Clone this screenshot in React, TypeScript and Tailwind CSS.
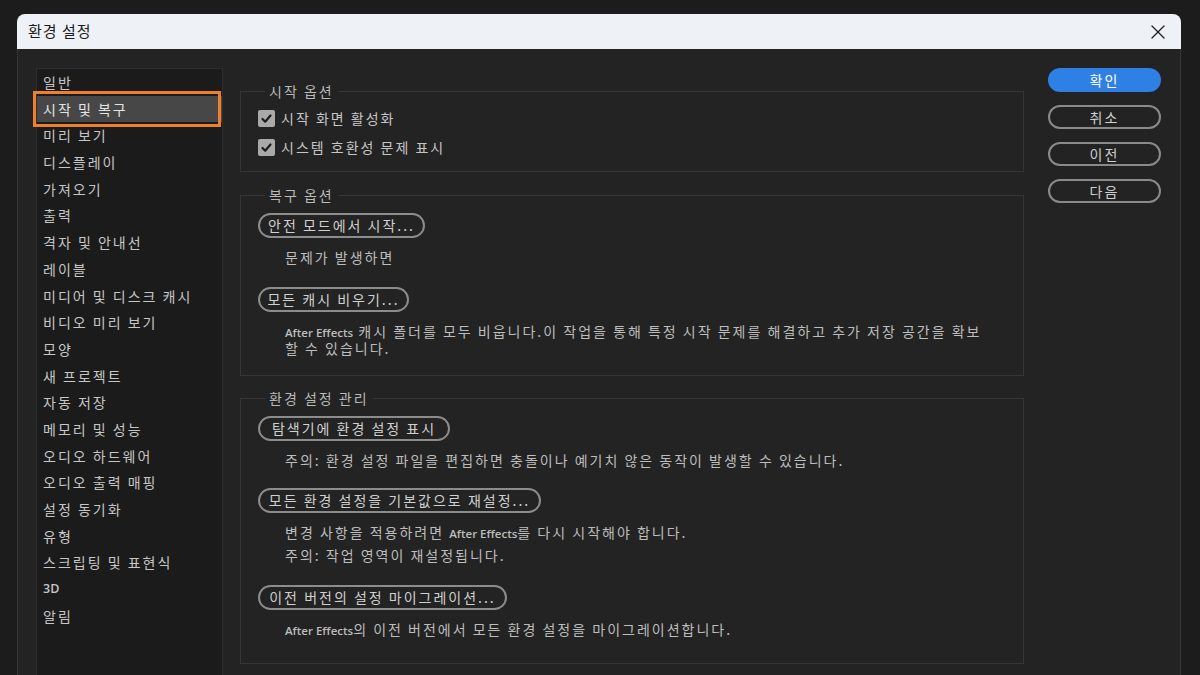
const KR = "font-['Noto_Sans_CJK_KR','Noto_Sans',sans-serif]"
const LATIN = "font-['Open_Sans','Liberation_Sans',sans-serif] text-[11.5px] leading-[1] font-semibold tracking-normal"

const sections = [
  '일반',
  '시작 및 복구',
  '미리 보기',
  '디스플레이',
  '가져오기',
  '출력',
  '격자 및 안내선',
  '레이블',
  '미디어 및 디스크 캐시',
  '비디오 미리 보기',
  '모양',
  '새 프로젝트',
  '자동 저장',
  '메모리 및 성능',
  '오디오 하드웨어',
  '오디오 출력 매핑',
  '설정 동기화',
  '유형',
  '스크립팅 및 표현식',
  '3D',
  '알림',
]

export default function App() {
  return (
    <div className={`w-[1200px] h-[675px] overflow-hidden bg-[#1c1c1c] pt-[14px] pl-[17px] pr-[19px] ${KR}`}>
      <div className="h-full flex flex-col">

        {/* Title bar */}
        <div className="h-[35px] flex-shrink-0 flex items-center justify-between rounded-t-[8px] bg-[#eef2f7] pl-[11px] pr-[16px]">
          <span className="text-[15px] tracking-[1px] text-[#1b1b1b]">환경 설정</span>
          <CloseIcon />
        </div>

        {/* Body */}
        <div className="flex-1 flex items-start bg-[#232323] border-x border-[#363636] pl-[18px] pt-[19px]">

          {/* Section list */}
          <div className="w-[187px] h-[640px] flex-shrink-0 border border-[#2e2e2e] bg-[#1b1b1b] text-[14px] tracking-[2px] text-[#c6c6c6]">
            {sections.map((s) =>
              s === '시작 및 복구' ? (
                <div key={s} className="relative h-[26.7px] leading-[26.7px] pl-[6px] bg-[#474747] text-[#e4e4e4]">
                  {s}
                  <span className="absolute -left-[4px] -top-[5px] w-[188px] h-[36px] border-[3px] border-[#ef7f2b]" />
                </div>
              ) : s === '3D' ? (
                <div key={s} className="h-[26.7px] leading-[26.7px] pl-[6px] font-['Open_Sans',sans-serif] text-[12.5px] font-semibold tracking-normal">
                  {s}
                </div>
              ) : (
                <div key={s} className="h-[26.7px] leading-[26.7px] pl-[6px]">
                  {s}
                </div>
              )
            )}
          </div>

          {/* Options */}
          <div className="ml-[17px] mt-[14px] w-[784px] flex-shrink-0 flex flex-col text-[14px] tracking-[2px]">

            <Group title="시작 옵션" height="h-[90px]">
              <div className="mt-[4px]" />
              <Check label="시작 화면 활성화" />
              <Check label="시스템 호환성 문제 표시" />
            </Group>

            <Group title="복구 옵션" height="h-[190px] mt-[14px]">
              <PillButton label="안전 모드에서 시작..." width="w-[167px]" className="mt-[9px]" />
              <Desc className="mt-[10px] leading-[18px]">문제가 발생하면</Desc>
              <PillButton label="모든 캐시 비우기..." width="w-[151px]" className="mt-[21px]" />
              <Desc className="mt-[11px] leading-[17px]">
                <span className={LATIN}>After Effects</span> 캐시 폴더를 모두 비웁니다.이 작업을 통해 특정 시작 문제를 해결하고 추가 저장 공간을 확보
                <br />
                할 수 있습니다.
              </Desc>
            </Group>

            <Group title="환경 설정 관리" height="h-[275px] mt-[13px]">
              <PillButton label="탐색기에 환경 설정 표시" width="w-[192px]" className="mt-[9px]" />
              <Desc className="mt-[10px] leading-[18px]">주의: 환경 설정 파일을 편집하면 충돌이나 예기치 않은 동작이 발생할 수 있습니다.</Desc>
              <PillButton label="모든 환경 설정을 기본값으로 재설정..." width="w-[283px]" className="mt-[19px]" />
              <Desc className="mt-[10px] leading-[18px]">
                변경 사항을 적용하려면 <span className={LATIN}>After Effects</span>를 다시 시작해야 합니다.
              </Desc>
              <Desc className="mt-[5px] leading-[18px]">주의: 작업 영역이 재설정됩니다.</Desc>
              <PillButton label="이전 버전의 설정 마이그레이션..." width="w-[249px]" className="mt-[21px]" />
              <Desc className="mt-[10px] leading-[18px]">
                <span className={LATIN}>After Effects</span>의 이전 버전에서 모든 환경 설정을 마이그레이션합니다.
              </Desc>
            </Group>
          </div>

          {/* Dialog buttons */}
          <div className="ml-[24px] w-[113px] flex-shrink-0 flex flex-col gap-[13px] text-[14px] tracking-[2px]">
            <button className="h-[24px] rounded-full bg-[#2e80e4] text-white">확인</button>
            <button className="h-[24px] rounded-full border-2 border-[#8a8a8a] text-[#cfcfcf]">취소</button>
            <button className="h-[24px] rounded-full border-2 border-[#8a8a8a] text-[#cfcfcf]">이전</button>
            <button className="h-[24px] rounded-full border-2 border-[#8a8a8a] text-[#cfcfcf]">다음</button>
          </div>
        </div>
      </div>
    </div>
  )
}

function Group({ title, height, children }: { title: string; height: string; children: React.ReactNode }) {
  return (
    <fieldset className={`${height} flex-shrink-0 border border-[#363636] pl-[17px]`}>
      <legend className="ml-[7px] px-[4px] leading-[18px] text-[#b9b9b9]">{title}</legend>
      <div className="flex flex-col items-start">{children}</div>
    </fieldset>
  )
}

function Check({ label }: { label: string }) {
  return (
    <div className="h-[29px] flex items-center gap-[6px] text-[#c6c6c6]">
      <span className="w-[17px] h-[17px] rounded-[2px] bg-[#a9a9a9] flex items-center justify-center">
        <svg width="13" height="13" viewBox="0 0 13 13" fill="none" stroke="#1c1c1c" strokeWidth="2.2" strokeLinecap="round" strokeLinejoin="round">
          <polyline points="2.5 7 5.2 9.7 10.5 3.5" />
        </svg>
      </span>
      {label}
    </div>
  )
}

function PillButton({ label, width, className = '' }: { label: string; width: string; className?: string }) {
  return (
    <button className={`${width} ${className} h-[25px] rounded-full border-2 border-[#8c8c8c] whitespace-nowrap text-[#d0d0d0] flex items-center justify-center`}>
      {label}
    </button>
  )
}

function Desc({ className = '', children }: { className?: string; children: React.ReactNode }) {
  return <p className={`pl-[27px] text-[#bdbdbd] whitespace-nowrap ${className}`}>{children}</p>
}

function CloseIcon() {
  return (
    <svg width="14" height="14" viewBox="0 0 14 14" fill="none" stroke="#1f1f1f" strokeWidth="1.3" strokeLinecap="round">
      <line x1="1" y1="1" x2="13" y2="13" />
      <line x1="13" y1="1" x2="1" y2="13" />
    </svg>
  )
}
